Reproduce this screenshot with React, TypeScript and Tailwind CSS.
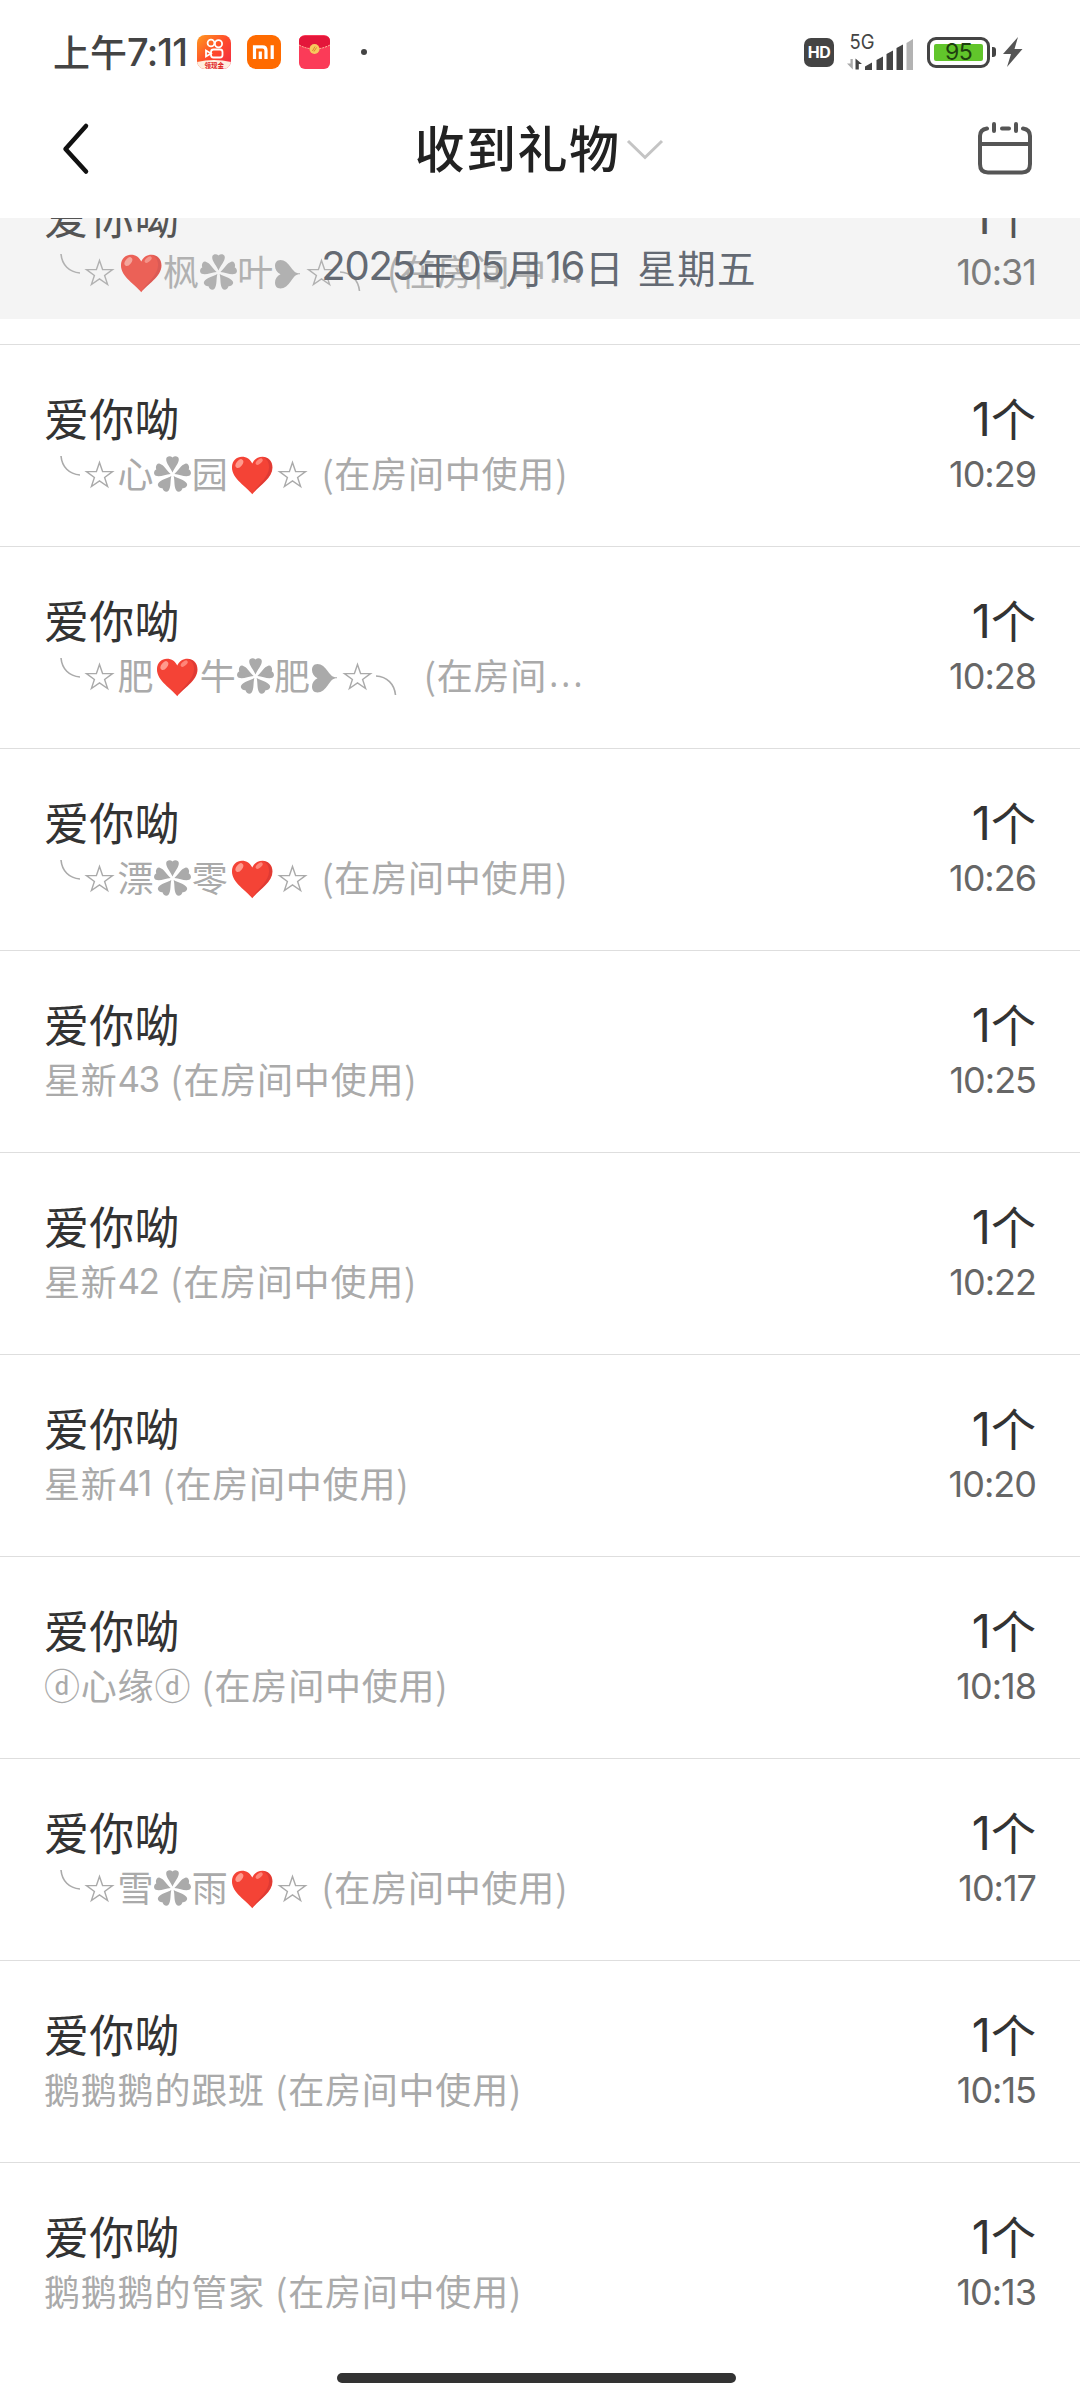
import React from "react";

const CJK = "font-['Noto_Sans_CJK_SC',sans-serif]";
const NUM = "font-[Inter,'Noto_Sans_CJK_SC',sans-serif]";

function Cell({ w, children }: { w: string; children: React.ReactNode }) {
  return <span className={`flex h-[54px] shrink-0 items-center ${w}`}>{children}</span>;
}

const ArcLeft = () => (
  <Cell w="w-[36.500px]">
    <svg width="36" height="54" viewBox="0 0 36 54" fill="none" stroke="#aaa" strokeWidth="1.6">
      <path d="M17 11C18 22 25 29 36 30" />
    </svg>
  </Cell>
);

const ArcRight = () => (
  <Cell w="w-[37px]">
    <svg width="37" height="54" viewBox="0 0 37 54" fill="none" stroke="#aaa" strokeWidth="1.6">
      <path d="M0 29C11 29.500 18.500 37 19.500 48" />
    </svg>
  </Cell>
);

const Star = () => (
  <Cell w="w-[37px]">
    <svg width="37" height="54" viewBox="0 0 37 54" fill="none" stroke="#aaa" strokeWidth="1.4">
      <path d="M18.500 17.500L21.600 26.600H31.500L23.600 32.400L26.600 41.500L18.500 35.900L10.400 41.500L13.400 32.400L5.500 26.600H15.400Z" />
    </svg>
  </Cell>
);

const Flower = () => (
  <Cell w="w-[37.4px]">
    <svg width="37" height="54" viewBox="0 0 37 54" fill="#aaa">
      {[0, 72, 144, 216, 288].map((a) => (
        <path
          key={a}
          transform={`rotate(${a} 18.500 29.500)`}
          d="M18.500 27.500C16.500 22.500 12 18.500 12.200 14C12.400 11 16.500 10.500 18.500 12.500C20.500 10.500 24.600 11 24.800 14C25 18.500 20.500 22.500 18.500 27.500Z"
        />
      ))}
    </svg>
  </Cell>
);

const Heart = () => (
  <Cell w="w-[45.500px]">
    <svg width="46" height="54" viewBox="0 0 46 54">
      <path
        d="M23.500 49.500C18 42 3 34 3 22.500C3 15 8 11.500 13 11.500C18 11.500 21.500 14 23.500 18.500C25.500 14 29 11.500 34 11.500C39 11.500 44 15 44 22.500C44 34 29 42 23.500 49.500Z"
        fill="#f44336"
      />
      <path
        d="M35 12C39.500 12.500 43.500 16 43.500 22.500C43.500 33.500 29 42 23.500 49C29 40 40 33 40.500 22.500C40.700 17.500 38.500 14 35 12Z"
        fill="#c33"
        opacity=".55"
      />
      <ellipse cx="10.500" cy="18.500" rx="3" ry="5" transform="rotate(38 10.500 18.500)" fill="#ff9a8d" />
      <ellipse cx="30.500" cy="16.500" rx="2.200" ry="4.200" transform="rotate(50 30.500 16.500)" fill="#ff8578" />
    </svg>
  </Cell>
);

const SideHeart = () => (
  <Cell w="w-[28.500px]">
    <svg width="28" height="54" viewBox="0 0 28 54" fill="#aaa">
      <path d="M26 31.300C21.500 31.300 20 34 17 38C14 42.500 10.500 45.500 6.500 45.500C2.500 45.500 1 42.500 1 39.500C1 36 3 33 6.500 31.300C3 29.500 1 26.500 1 23C1 20 2.500 17 6.500 17C10.500 17 14 20 17 24.500C20 28.500 21.500 30.300 26 30.300Z" />
    </svg>
  </Cell>
);

const glyphs: Record<string, () => React.ReactElement> = {
  "╰": ArcLeft,
  "╮": ArcRight,
  "☆": Star,
  "✿": Flower,
  "❤": Heart,
  "❥": SideHeart,
};

function Subtitle({ text }: { text: string }) {
  const parts = text.split(/([╰╮☆✿❤❥…]|\d+)/).filter(Boolean);
  return (
    <div
      className={`flex h-[54px] whitespace-pre text-[36px] leading-[54px] tracking-[0.8px] text-[#aaa] [word-spacing:1.5px] ${CJK}`}
    >
      {parts.map((p, i) => {
        const G = glyphs[p];
        if (G) return <G key={i} />;
        if (p === "…")
          return (
            <span key={i} className="ml-[2px] font-['Open_Sans',sans-serif] tracking-[2.6px]">
              ...
            </span>
          );
        if (/\d/.test(p))
          return (
            <span key={i} className={`pr-[1.5px] text-[35px] leading-[56px] tracking-[-1.6px] ${NUM}`}>
              {p}
            </span>
          );
        return <span key={i}>{p}</span>;
      })}
    </div>
  );
}

const rows = [
  { from: "╰☆❤枫✿叶❥☆╮ (在房间中…", time: "10:31" },
  { from: "╰☆心✿园❤☆ (在房间中使用)", time: "10:29" },
  { from: "╰☆肥❤牛✿肥❥☆╮ (在房间…", time: "10:28" },
  { from: "╰☆漂✿零❤☆ (在房间中使用)", time: "10:26" },
  { from: "星新43 (在房间中使用)", time: "10:25" },
  { from: "星新42 (在房间中使用)", time: "10:22" },
  { from: "星新41 (在房间中使用)", time: "10:20" },
  { from: "ⓓ心缘ⓓ (在房间中使用)", time: "10:18" },
  { from: "╰☆雪✿雨❤☆ (在房间中使用)", time: "10:17" },
  { from: "鹅鹅鹅的跟班 (在房间中使用)", time: "10:15" },
  { from: "鹅鹅鹅的管家 (在房间中使用)", time: "10:13" },
];

function GiftRow({ from, time, last }: { from: string; time: string; last: boolean }) {
  return (
    <li
      className={`flex h-[202px] shrink-0 justify-between border-b pl-[44px] pr-[44px] pt-[44px] ${
        last ? "border-transparent" : "border-[#dedede]"
      }`}
    >
      <div>
        <div className={`h-[56px] text-[45px] leading-[57px] tracking-[0.2px] text-[#333] ${CJK}`}>爱你呦</div>
        <Subtitle text={from} />
      </div>
      <div className="flex flex-col items-end">
        <div className="flex h-[56px] text-[#333]">
          <span className={`text-[47px] leading-[60px] ${NUM}`}>1</span>
          <span className={`text-[45px] leading-[57px] ${CJK}`}>个</span>
        </div>
        <div className={`h-[54px] text-[36px] leading-[59px] tracking-[-1px] text-[#666] ${NUM}`}>{time}</div>
      </div>
    </li>
  );
}

function StatusBar() {
  return (
    <div className="flex h-[104px] items-center justify-between pl-[53px] pr-[57px] text-[#444]">
      <div className="flex items-center">
        <span className={`-mt-[2px] text-[37px] font-medium leading-[54px] ${CJK}`}>上午</span>
        <span className={`w-[70px] text-[38px] font-medium leading-[54px] tracking-[-0.8px] ${NUM}`}>7:11</span>
        <svg width="34" height="34" viewBox="0 0 34 34">
          <defs>
            <linearGradient id="ks" x1="0" y1="0" x2="1" y2="1">
              <stop offset="0" stopColor="#ff9a1f" />
              <stop offset=".5" stopColor="#ff4a2b" />
              <stop offset="1" stopColor="#f0284a" />
            </linearGradient>
            <clipPath id="ksc">
              <rect width="34" height="34" rx="8" />
            </clipPath>
          </defs>
          <g clipPath="url(#ksc)">
            <rect width="34" height="34" fill="url(#ks)" />
            <g fill="none" stroke="#fff" strokeWidth="1.800">
              <circle cx="14" cy="8" r="3.400" />
              <circle cx="21.500" cy="8.700" r="3.600" />
              <rect x="14" y="14.500" width="11.500" height="8" rx="2.500" />
              <path d="M14 18.500L9 15.500V21.500Z" />
            </g>
            <path d="M0 27Q17 23 34 27V34H0Z" fill="#ffeede" />
          </g>
          <text x="7.500" y="33" fontSize="6.500" fontWeight="bold" fontFamily="Noto Sans CJK SC" fill="#e02020">
            领现金
          </text>
        </svg>
        <svg className="ml-[16px]" width="34" height="34" viewBox="0 0 34 34">
          <rect width="34" height="34" rx="9" fill="#ff6b00" />
          <path d="M7.500 24V11.800H15.500Q19 11.800 19 15.500V24M13.300 16.500V24M25.200 10.300V24" fill="none" stroke="#fff" strokeWidth="3.200" />
        </svg>
        <svg className="ml-[17px]" width="33" height="34" viewBox="0 0 33 34">
          <rect x="1" width="31" height="34" rx="6" fill="#fb3b58" />
          <path d="M1 10V6Q1 1 7 1H26Q32 1 32 6V10Q16.500 18 1 10Z" fill="#e4163a" />
          <path d="M1 10Q16.500 18 32 10" fill="none" stroke="#ffc6a0" strokeWidth="1" strokeDasharray="2 1" />
          <circle cx="16.500" cy="14" r="5" fill="#f7c95e" />
          <path d="M14.500 16L17 11.500M16 16.500L18.500 12.500" stroke="#d98a2b" strokeWidth="1" />
        </svg>
        <span className="ml-[30px] size-[6px] rounded-full bg-[#444]" />
      </div>
      <div className="flex items-center">
        <span className="flex h-[29px] w-[30px] items-center justify-center rounded-[7px] bg-[#444] font-[Inter,sans-serif] text-[16px] font-bold tracking-[-0.4px] text-white">
          HD
        </span>
        <svg className="ml-[12px]" width="68" height="40" viewBox="0 0 68 40">
          <text x="3.500" y="17" fontSize="20" fontFamily="Inter" textLength="25" lengthAdjust="spacingAndGlyphs" fill="#444">
            5G
          </text>
          <path d="M4.500 27H6.800V37.500L1 31.500H4.500Z" fill="#aaa" />
          <path d="M9.500 37.500V26.500L16 32H12.800V37.500Z" fill="#444" />
          <path d="M19 38V34.500L26 30.500V38Z M30.500 38V28L37 24.500V38Z M40.500 38V22L47 18.500V38Z M50.500 38V16L57 12.500V38Z" fill="#444" />
          <path d="M60.500 38V11L67 7V38Z" fill="#b3b3b3" />
        </svg>
        <span className="ml-[13px] flex h-[31px] w-[63px] rounded-[9px] border-[3px] border-[#444] p-[4px]">
          <span className="flex flex-1 items-center justify-center rounded-[2px] bg-[#61c52b] font-[Inter,sans-serif] text-[23px] leading-none tracking-[-0.5px] text-[#1f4010]">
            95
          </span>
        </span>
        <span className="ml-[2px] h-[10px] w-[4px] rounded-r-[3px] bg-[#444]" />
        <svg className="ml-[7px]" width="20" height="30" viewBox="0 0 20 30">
          <path d="M15 0L0 17H8L4 30L19.500 12H11.500Z" fill="#555" />
        </svg>
      </div>
    </div>
  );
}

function TitleBar() {
  return (
    <div className="flex h-[114px] items-center justify-between pb-[26px] pl-[60px] pr-[46px]">
      <svg width="88" height="54" viewBox="0 0 88 54" fill="none" stroke="#111" strokeWidth="4.500" strokeLinecap="round" strokeLinejoin="round">
        <path d="M26 5L5.500 28L26 50.500" />
      </svg>
      <h1 className={`-mt-[4px] mr-[46px] flex items-center text-[50px] font-medium leading-[70px] tracking-[1.5px] text-[#222] ${CJK}`}>
        收到礼物
        <svg className="ml-[5px] mt-[8px]" width="38" height="22" viewBox="0 0 38 22" fill="none" stroke="#c4c4c4" strokeWidth="3">
          <path d="M2 2L19 18.500L36 2" />
        </svg>
      </h1>
      <svg width="58" height="56" viewBox="0 0 58 56" fill="none" stroke="#555" strokeWidth="4" strokeLinecap="round">
        <path d="M11 8.500Q4 9.500 4 16V44Q4 52.500 12 52.500H46Q54 52.500 54 44V16Q54 9.500 47 8.500M4 24H54M26 8.500H33M18 4V11M40 4V11" />
      </svg>
    </div>
  );
}

function DateNumber({ children }: { children: string }) {
  return <span className={`text-[40px] tracking-[-1.2px] ${NUM}`}>{children}</span>;
}

export default function App() {
  return (
    <div className="relative flex h-[2400px] w-[1080px] flex-col overflow-hidden bg-white">
      <StatusBar />
      <TitleBar />
      <div className="relative min-h-0 flex-1 overflow-hidden">
        <ul className="-mt-[75px] flex flex-col">
          {rows.map((r, i) => (
            <GiftRow key={r.time} {...r} last={i === rows.length - 1} />
          ))}
        </ul>
        <div className="absolute inset-x-0 top-0 flex h-[101px] items-center justify-center bg-[rgba(205,205,205,0.22)] pb-[5px] pr-[2px] text-[#646a73]">
          <p className={`flex whitespace-pre text-[38.5px] leading-[56px] tracking-[1.2px] [word-spacing:3px] ${CJK}`}>
            <DateNumber>2025</DateNumber>
            <span className="ml-[2px]">年</span>
            <DateNumber>05</DateNumber>
            <span className="ml-[2px]">月</span>
            <DateNumber>16</DateNumber>
            <span className="ml-[1px]">日 星期五</span>
          </p>
        </div>
      </div>
      <div className="absolute bottom-[17px] left-[337px] h-[10px] w-[399px] rounded-full bg-[#333]" />
    </div>
  );
}
